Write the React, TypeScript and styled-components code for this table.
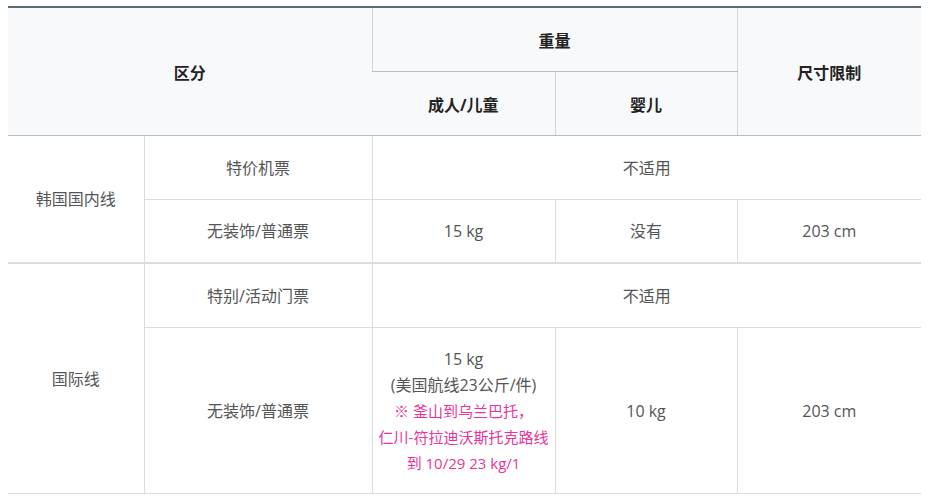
import React from "react";
import styled, { createGlobalStyle } from "styled-components";

const Global = createGlobalStyle`
  html, body { margin: 0; padding: 0; background: #fff; }
  body { padding: 6px 8px 0 8px; font-family: "Open Sans", "Noto Sans CJK SC", sans-serif; }
`;

const Table = styled.table`
  width: 913px;
  border-collapse: collapse;
  table-layout: fixed;
  border-top: 2px solid #5d6973;
  border-bottom: 1px solid #b3bcc5;
  font-size: 16px;
  text-align: center;
`;

const HeadCell = styled.th`
  background: #f8f9fb;
  color: #222;
  font-weight: 700;
  height: 63px;
  padding: 0;
  border-left: 1px solid #d0d6dd;
  border-bottom: 1px solid #b3bcc5;
  &:first-child { border-left: none; }
`;

const SubHead = styled(HeadCell)`
  border-top: 1px solid #b3bcc5;
`;

const Cell = styled.td<{ $first?: boolean; $groupEnd?: boolean; $tall?: boolean }>`
  color: #555;
  height: ${(p) => (p.$tall ? "165px" : p.$groupEnd ? "62px" : "63px")};
  padding: 0;
  border-left: ${(p) => (p.$first ? "none" : "1px solid #dcdcdc")};
  border-bottom: ${(p) => (p.$groupEnd ? "2px solid #dcdcdc" : "1px solid #dcdcdc")};
  line-height: 26px;
`;

const Note = styled.span`
  display: block;
  color: #e8349a;
  font-size: 15px;
`;

const Line = styled.span`
  display: block;
`;

export default function App() {
  return (
    <>
      <Global />
      <Table>
        <colgroup>
          <col style={{ width: 136 }} />
          <col style={{ width: 228 }} />
          <col style={{ width: 183 }} />
          <col style={{ width: 182 }} />
          <col style={{ width: 184 }} />
        </colgroup>
        <thead>
          <tr>
            <HeadCell colSpan={2} rowSpan={2}>区分</HeadCell>
            <HeadCell colSpan={2}>重量</HeadCell>
            <HeadCell rowSpan={2}>尺寸限制</HeadCell>
          </tr>
          <tr>
            <SubHead>成人/儿童</SubHead>
            <SubHead>婴儿</SubHead>
          </tr>
        </thead>
        <tbody>
          <tr>
            <Cell $first rowSpan={2} $groupEnd>韩国国内线</Cell>
            <Cell>特价机票</Cell>
            <Cell colSpan={3}>不适用</Cell>
          </tr>
          <tr>
            <Cell $groupEnd>无装饰/普通票</Cell>
            <Cell $groupEnd>15 kg</Cell>
            <Cell $groupEnd>没有</Cell>
            <Cell $groupEnd>203 cm</Cell>
          </tr>
          <tr>
            <Cell $first rowSpan={2}>国际线</Cell>
            <Cell>特别/活动门票</Cell>
            <Cell colSpan={3}>不适用</Cell>
          </tr>
          <tr>
            <Cell>无装饰/普通票</Cell>
            <Cell $tall>
              <Line>15 kg</Line>
              <Line>(美国航线23公斤/件)</Line>
              <Note>※ 釜山到乌兰巴托，</Note>
              <Note>仁川-符拉迪沃斯托克路线</Note>
              <Note>到 10/29 23 kg/1</Note>
            </Cell>
            <Cell>10 kg</Cell>
            <Cell>203 cm</Cell>
          </tr>
        </tbody>
      </Table>
    </>
  );
}
